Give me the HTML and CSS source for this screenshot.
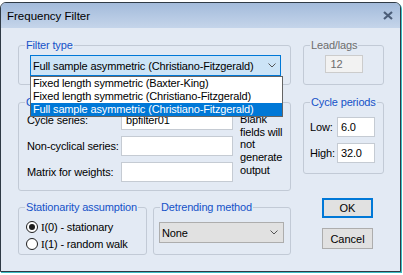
FILE: index.html
```html
<!DOCTYPE html>
<html lang="en">
<head>
    <meta charset="UTF-8">
    <meta name="viewport" content="width=device-width, initial-scale=1.0">
    <title>Frequency Filter</title>
    <link rel="stylesheet" href="styles.css">
</head>
<body>
    <div class="dialog">
        <header class="dialog-title">
            <span>Frequency Filter</span>
            <svg class="close-icon" width="10" height="9" viewBox="0 0 10 9">
                <path d="M1 1 L9 8 M9 1 L1 8" stroke="#4b5d78" stroke-width="2.2" fill="none"/>
            </svg>
        </header>

        <div class="dialog-body">
            <fieldset class="group group-filter">
                <legend>Filter type</legend>
                <div class="combo combo-open">
                    <span>Full sample asymmetric (Christiano-Fitzgerald)</span>
                    <svg class="chevron" width="8" height="5" viewBox="0 0 8 5">
                        <path d="M0.5 0.5 L4 4 L7.5 0.5" stroke="#555" fill="none"/>
                    </svg>
                    <ul class="combo-list">
                        <li>Fixed length symmetric (Baxter-King)</li>
                        <li>Fixed length symmetric (Christiano-Fitzgerald)</li>
                        <li class="selected">Full sample asymmetric (Christiano-Fitzgerald)</li>
                    </ul>
                </div>
            </fieldset>

            <fieldset class="group group-leads">
                <legend class="legend-disabled">Lead/lags</legend>
                <div class="textbox textbox-disabled">12</div>
            </fieldset>

            <fieldset class="group group-output">
                <legend>Output</legend>
                <div class="output-grid">
                    <label>Cycle series:</label>
                    <div class="textbox">bpfilter01</div>
                    <label>Non-cyclical series:</label>
                    <div class="textbox"></div>
                    <label>Matrix for weights:</label>
                    <div class="textbox"></div>
                    <p class="note">Blank fields will not generate output</p>
                </div>
            </fieldset>

            <fieldset class="group group-periods">
                <legend>Cycle periods</legend>
                <div class="period-row">
                    <label>Low:</label>
                    <div class="textbox period-input">6.0</div>
                </div>
                <div class="period-row">
                    <label>High:</label>
                    <div class="textbox period-input">32.0</div>
                </div>
            </fieldset>

            <div class="bottom-groups">
                <fieldset class="group group-stationarity">
                    <legend>Stationarity assumption</legend>
                    <div class="radio">
                        <span class="radio-dot checked"></span>
                        <span><span class="roman">I</span>(0) - stationary</span>
                    </div>
                    <div class="radio">
                        <span class="radio-dot"></span>
                        <span><span class="roman">I</span>(1) - random walk</span>
                    </div>
                </fieldset>

                <fieldset class="group group-detrend">
                    <legend>Detrending method</legend>
                    <div class="combo combo-detrend">
                        <span>None</span>
                        <svg class="chevron" width="8" height="5" viewBox="0 0 8 5">
                            <path d="M0.5 0.5 L4 4 L7.5 0.5" stroke="#555" fill="none"/>
                        </svg>
                    </div>
                </fieldset>
            </div>

            <div class="buttons">
                <button class="btn btn-default">OK</button>
                <button class="btn">Cancel</button>
            </div>
        </div>
    </div>
</body>
</html>
```

FILE: styles.css
```css
* {
    box-sizing: border-box;
}

body {
    margin: 0;
    width: 403px;
    height: 275px;
    overflow: hidden;
    background: #fff;
    font-family: "Liberation Sans", Arial, sans-serif;
    font-size: 11px;
    letter-spacing: -0.15px;
    color: #000;
}

.dialog {
    margin-top: 2px;
    width: 401px;
    height: 270px;
    border: 1px solid #2f3a45;
    border-radius: 6px 6px 0 0;
    box-shadow: 1px 1px 0 #3bbdc4;
    background: #e3eaf4;
    display: flex;
    flex-direction: column;
}

.dialog-title {
    height: 25px;
    display: flex;
    align-items: center;
    justify-content: space-between;
    padding: 0 7px 0 6px;
    background: linear-gradient(#a3bbdb, #c5d5ea);
    border-radius: 5px 5px 0 0;
    font-size: 11.5px;
    letter-spacing: 0;
}

.close-icon {
    margin-top: -1px;
}

.dialog-body {
    flex: 1;
    padding: 10px 0 0 17px;
    display: grid;
    grid-template-columns: 273px 81px;
    grid-template-rows: 57px 105px auto;
    column-gap: 12px;
    align-items: start;
}

label {
    white-space: nowrap;
}

/* group boxes */
.group {
    margin: 0;
    padding: 0;
    min-width: 0;
    border: 1px solid #c2cad6;
    border-radius: 3px;
}

.group legend {
    margin-left: 6px;
    padding: 0 1px;
    line-height: 14px;
    white-space: nowrap;
    color: #1552c8;
}

.group legend.legend-disabled {
    color: #6d6d6d;
}

.group-filter,
.group-leads {
    height: 47px;
}

.group-output {
    height: 96px;
}

.group-periods {
    height: 79px;
}

/* combo boxes */
.combo {
    position: relative;
    display: flex;
    align-items: center;
    justify-content: space-between;
    height: 21px;
    padding: 0 4px 0 2px;
    border: 1px solid #adadad;
    background: #e1e1e1;
}

.group-filter .combo {
    width: 251px;
    margin: 3px 0 0 11px;
}

.combo-open {
    border-color: #0078d7;
    background: #cce4f7;
}

.combo-list {
    position: absolute;
    top: calc(100% + 1px);
    left: -1px;
    width: 253px;
    margin: 0;
    padding: 0;
    list-style: none;
    background: #fff;
    border: 1px solid #646464;
    z-index: 2;
}

.combo-list li {
    height: 13px;
    line-height: 13px;
    padding-left: 2px;
    white-space: nowrap;
}

.combo-list .selected {
    background: #0078d7;
    color: #fff;
}

.combo-detrend {
    width: 125px;
    margin: 8px 0 0 5px;
    padding-right: 5px;
}

/* text boxes */
.textbox {
    height: 20px;
    line-height: 18px;
    padding: 0 4px;
    background: #fff;
    border: 1px solid #c5cbd3;
}

.textbox-disabled {
    width: 38px;
    height: 18px;
    line-height: 16px;
    margin: 3px auto 0;
    padding-left: 5px;
    background: #f2f2f2;
    border-color: #ccc;
    color: #6d6d6d;
}

.output-grid {
    display: grid;
    grid-template-columns: 94px 112px 1fr;
    grid-auto-rows: 20px;
    row-gap: 6px;
    align-items: center;
    padding: 1px 0 0 8px;
}

.note {
    grid-column: 3;
    grid-row: 1 / span 3;
    align-self: start;
    margin: 3px 0 0 7px;
    line-height: 12.7px;
}

.period-row {
    display: flex;
    align-items: center;
    padding-left: 6px;
}

.period-row:first-of-type {
    margin-top: 8px;
}

.period-row + .period-row {
    margin-top: 6px;
}

.period-row label {
    width: 27px;
}

.period-input {
    width: 38px;
    padding-left: 3px;
}

/* bottom row */
.bottom-groups {
    display: flex;
    gap: 6px;
}

.group-stationarity {
    width: 129px;
    height: 55px;
    padding-left: 7px;
}

.group-stationarity legend {
    margin-left: -1px;
}

.group-detrend {
    width: 138px;
    height: 55px;
}

.radio {
    display: flex;
    align-items: center;
    height: 17px;
    white-space: nowrap;
}

.radio:first-of-type {
    margin-top: 4px;
}

.radio-dot {
    position: relative;
    width: 12px;
    height: 12px;
    margin-right: 3px;
    border: 1px solid #1e1e1e;
    border-radius: 50%;
    background: #fff;
}

.radio-dot.checked::after {
    content: "";
    position: absolute;
    left: 2px;
    top: 2px;
    width: 6px;
    height: 6px;
    border-radius: 50%;
    background: #1e1e1e;
}

.roman {
    font-family: "Liberation Serif", serif;
}

.buttons {
    display: flex;
    flex-direction: column;
    gap: 10px;
    margin-top: -2px;
    padding-left: 19px;
}

.btn {
    width: 51px;
    height: 21px;
    padding: 0;
    font: inherit;
    color: #000;
    background: #e1e1e1;
    border: 1px solid #adadad;
}

.btn-default {
    height: 20px;
    border: 2px solid #0078d7;
}
```
